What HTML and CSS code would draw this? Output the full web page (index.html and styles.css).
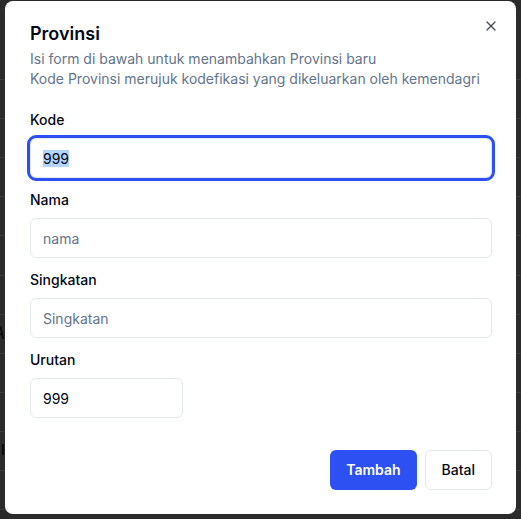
FILE: index.html
```html
<!DOCTYPE html>
<html lang="id">
<head>
<meta charset="utf-8">
<title>Provinsi</title>
<link rel="stylesheet" href="styles.css">
</head>
<body>
<div class="page">
  <div class="row"></div>
  <div class="row"></div>
  <div class="row"></div>
  <div class="row"></div>
  <div class="row"></div>
  <div class="row"></div>
  <div class="row"></div>
  <div class="row"><span class="glyph glyph-a"></span></div>
  <div class="row"></div>
  <div class="row"></div>
  <div class="row"><span class="glyph glyph-n"></span></div>
  <div class="row"></div>
</div>
<div class="overlay">
  <div class="dialog" role="dialog" aria-labelledby="dlg-title">
    <button class="close" type="button" aria-label="Close">
      <svg width="16" height="16" viewBox="0 0 24 24" fill="none" stroke="currentColor" stroke-width="2" stroke-linecap="round" stroke-linejoin="round"><path d="M18 6 6 18"/><path d="m6 6 12 12"/></svg>
    </button>
    <div class="header">
      <h2 class="title" id="dlg-title">Provinsi</h2>
      <p class="desc"><span class="line">Isi form di bawah untuk menambahkan Provinsi baru</span><span class="line">Kode Provinsi merujuk kodefikasi yang dikeluarkan oleh kemendagri</span></p>
    </div>
    <form class="form">
      <div class="field">
        <label class="label" for="kode">Kode</label>
        <input class="input" id="kode" type="text" value="999">
      </div>
      <div class="field">
        <label class="label" for="nama">Nama</label>
        <input class="input" id="nama" type="text" placeholder="nama">
      </div>
      <div class="field">
        <label class="label" for="singkatan">Singkatan</label>
        <input class="input" id="singkatan" type="text" placeholder="Singkatan">
      </div>
      <div class="field">
        <label class="label" for="urutan">Urutan</label>
        <input class="input input-short" id="urutan" type="text" value="999">
      </div>
    </form>
    <div class="footer">
      <button class="btn btn-primary" type="button">Tambah</button>
      <button class="btn btn-outline" type="button">Batal</button>
    </div>
  </div>
</div>
<script src="script.js"></script>
</body>
</html>
```
FILE: styles.css
```css
* { box-sizing: border-box; }
html, body { margin: 0; padding: 0; }
body {
  background: #2b2b2b;
  font-family: Inter, "Noto Sans", "Liberation Sans", sans-serif;
  overflow: hidden;
  height: 519px;
}
.page {
  padding-top: 41px;
  display: flex;
  flex-direction: column;
}
.row {
  height: 39.1px;
  border-bottom: 1px solid #3a3a3a;
  display: flex;
  align-items: center;
}
.glyph {
  display: block;
  background: #0c0c0c;
}
.glyph-a {
  width: 4px;
  height: 13px;
  margin-top: -2px;
  clip-path: polygon(0 0, 35% 0, 100% 100%, 55% 100%, 40% 70%, 0 70%, 0 55%, 30% 55%, 0 20%);
}
.glyph-n {
  width: 2px;
  height: 11px;
  margin-left: 2px;
  margin-top: -2px;
}
.overlay {
  position: fixed;
  inset: 0;
  display: flex;
  justify-content: center;
  align-items: flex-start;
  padding-top: 1px;
}
.dialog {
  position: relative;
  width: 511px;
  background: #fff;
  border-radius: 8px;
  padding: 24px 24px 24px 25px;
  display: flex;
  flex-direction: column;
}
.close {
  position: absolute;
  top: 17px;
  right: 17px;
  width: 16px;
  height: 16px;
  padding: 0;
  border: 0;
  background: none;
  color: #0f172a;
  opacity: 0.75;
  display: flex;
}
.header {
  display: flex;
  flex-direction: column;
  gap: 6px;
}
.title {
  margin: 0;
  font-size: 18px;
  font-weight: 600;
  line-height: 18px;
  color: #020817;
}
.desc {
  margin: 0;
  font-size: 14px;
  line-height: 20px;
  color: #64748b;
}
.line { display: block; }
.form {
  margin-top: 21px;
  display: flex;
  flex-direction: column;
  gap: 12px;
}
.field {
  display: flex;
  flex-direction: column;
  gap: 8px;
}
.label {
  font-size: 14px;
  font-weight: 500;
  line-height: 20px;
  color: #020817;
}
.input {
  height: 40px;
  width: 100%;
  border: 1px solid #e2e8f0;
  border-radius: 6px;
  padding: 0 12px;
  font-family: inherit;
  font-size: 14px;
  color: #020817;
  background: #fff;
}
.input::placeholder { color: #64748b; }
.input:focus {
  outline: 3px solid #2c50f2;
  outline-offset: 0;
}
.input::selection { background: #b4d5fd; color: #020817; }
.input-short { width: 153px; }
.footer {
  margin-top: 32px;
  display: flex;
  justify-content: flex-end;
  gap: 8px;
}
.btn {
  height: 40px;
  padding: 0 16px;
  border-radius: 6px;
  font-family: inherit;
  font-size: 14px;
  font-weight: 600;
  line-height: 20px;
}
.btn-primary {
  background: #2c50f2;
  color: #fff;
  border: 0;
}
.btn-outline {
  background: #fff;
  color: #020817;
  border: 1px solid #e2e8f0;
  font-weight: 500;
}
```
FILE: script.js
```js
window.addEventListener('load', function () {
  var k = document.getElementById('kode');
  k.focus();
  k.setSelectionRange(0, k.value.length);
});
```
